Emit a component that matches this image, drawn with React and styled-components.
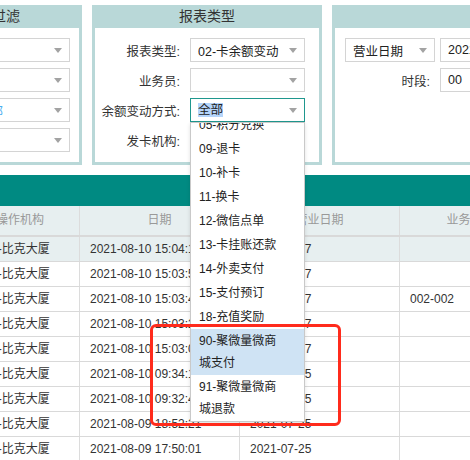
import React, { useLayoutEffect, useRef } from "react";
import styled, { createGlobalStyle } from "styled-components";

const GlobalStyle = createGlobalStyle`
  html, body { margin: 0; padding: 0; background: #fff; overflow: hidden; }
  body { font-family: "Liberation Sans", "Noto Sans CJK SC", sans-serif; color: #333; }
  * { box-sizing: border-box; }
`;

const Viewport = styled.div`
  position: relative;
  width: 470px;
  height: 460px;
  overflow: hidden;
`;

const Page = styled.div`
  margin-left: -98px;
  width: 900px;
  padding-top: 5px;
`;

const PanelRow = styled.div`
  display: flex;
  gap: 10px;
`;

const Panel = styled.section`
  flex: none;
  width: ${(p) => p.$w}px;
  background: #b9d8d8;
  padding: 0 3px 3px;
  display: flex;
  flex-direction: column;
`;

const PanelTitle = styled.div`
  height: 23px;
  line-height: 23px;
  text-align: center;
  font-size: 14px;
  color: #333;
`;

const PanelBody = styled.div`
  flex: 1;
  background: #fff;
  padding: 10px ${(p) => p.$pr}px 10px ${(p) => p.$pl}px;
  display: grid;
  grid-template-columns: ${(p) => p.$cols};
  column-gap: ${(p) => p.$gap}px;
  row-gap: 6px;
  align-items: center;
  align-content: start;
`;

const Label = styled.div`
  font-size: 12.5px;
  color: #333;
  text-align: right;
  white-space: nowrap;
  padding-right: ${(p) => p.$pr || 0}px;
`;

const Box = styled.div`
  position: relative;
  height: 24px;
  border: 1px solid ${(p) => (p.$focused ? "#1f978e" : "#d4d4d4")};
  background: #fff;
  display: flex;
  align-items: center;
  padding: 0 ${(p) => (p.$arrow ? 24 : 6)}px 0 7px;
  font-size: 12.5px;
  color: #222;
  white-space: nowrap;
`;

const BoxText = styled.span`
  min-width: 0;
  overflow: hidden;
  color: ${(p) => p.$color || "#222"};
`;

const Highlight = styled.span`
  background: #b5d5fb;
  line-height: 17px;
`;

const Arrow = styled.span`
  position: absolute;
  right: 7px;
  top: 9px;
  width: 0;
  height: 0;
  border-left: 4px solid transparent;
  border-right: 4px solid transparent;
  border-top: 5px solid #a3a3a3;
`;

const DropList = styled.ul`
  position: absolute;
  top: calc(100% + 1px);
  left: -1px;
  width: calc(100% + 2px);
  height: 300px;
  margin: 0;
  padding: 0;
  list-style: none;
  background: #fff;
  border: 1px solid #c9c9c9;
  box-shadow: 0 2px 4px rgba(0, 0, 0, 0.12);
  overflow-y: scroll;
  z-index: 10;
  white-space: normal;

  &::-webkit-scrollbar { width: 14px; background: #fff; }
  &::-webkit-scrollbar-track { background: #fff; }
  &::-webkit-scrollbar-thumb {
    background: #b4b4b4;
    border-radius: 7px;
    border: 3px solid #fff;
  }
`;

const DropItem = styled.li`
  padding: 1px 8px;
  line-height: 22px;
  font-size: 12px;
  color: #222;
  background: ${(p) => (p.$active ? "#cfe3f4" : "transparent")};
`;

const DropText = styled.span`
  display: block;
  max-width: 80px;
  white-space: normal;
  word-break: break-all;
`;

const TealBar = styled.div`
  margin-top: 10px;
  height: 31px;
  background: #008a82;
`;

const COLS = "59px 119px 160px 160px 130px 200px";

const Row = styled.div`
  display: grid;
  grid-template-columns: ${COLS};
  height: ${(p) => (p.$head ? 31 : 25)}px;
  background: ${(p) => (p.$head || p.$active ? "#e7eff0" : "#fff")};
  border-bottom: ${(p) => (p.$head ? 2 : 1)}px solid #d9d9d9;
`;

const Cell = styled.div`
  border-right: 1px solid #dcdcdc;
  font-size: 12px;
  white-space: nowrap;
  overflow: hidden;
  color: ${(p) => (p.$head ? "#999" : "#333")};
  text-align: ${(p) => (p.$head ? "center" : "left")};
  padding-left: ${(p) => (p.$head ? 0 : 10)}px;
  line-height: ${(p) => (p.$head ? 29 : 24)}px;
`;

const Annotation = styled.div`
  position: absolute;
  left: 150px;
  top: 324px;
  width: 191px;
  height: 102px;
  border: 3px solid #ff2b1c;
  border-radius: 6px;
  z-index: 20;
  pointer-events: none;
`;

const options = [
  "全部", "01-充值", "02-消费", "03-消费撤销", "04-积分消费", "05-积分兑换",
  "09-退卡", "10-补卡", "11-换卡", "12-微信点单", "13-卡挂账还款", "14-外卖支付",
  "15-支付预订", "18-充值奖励", "90-聚微量微商城支付", "91-聚微量微商城退款",
];

const rows = [
  ["1", "0001-比克大厦", "2021-08-10 15:04:12", "2021-07-27", ""],
  ["2", "0001-比克大厦", "2021-08-10 15:03:51", "2021-07-27", ""],
  ["3", "0001-比克大厦", "2021-08-10 15:03:40", "2021-07-27", "002-002"],
  ["4", "0001-比克大厦", "2021-08-10 15:03:22", "2021-07-27", ""],
  ["5", "0001-比克大厦", "2021-08-10 15:03:05", "2021-07-27", ""],
  ["6", "0001-比克大厦", "2021-08-10 09:34:18", "2021-07-25", ""],
  ["7", "0001-比克大厦", "2021-08-10 09:32:47", "2021-07-25", ""],
  ["8", "0001-比克大厦", "2021-08-09 18:52:21", "2021-07-25", ""],
  ["9", "0001-比克大厦", "2021-08-09 17:50:01", "2021-07-25", ""],
  ["10", "0001-比克大厦", "2021-08-09 17:45:33", "2021-07-25", ""],
];

function Select({ value, focused, color, children }) {
  return (
    <Box $arrow $focused={focused}>
      <BoxText $color={color}>{value}</BoxText>
      <Arrow />
      {children}
    </Box>
  );
}

function Dropdown() {
  const ref = useRef(null);
  useLayoutEffect(() => {
    if (ref.current) ref.current.scrollTop = ref.current.scrollHeight;
  }, []);
  return (
    <DropList ref={ref}>
      {options.map((o) => (
        <DropItem key={o} $active={o.startsWith("90")}>
          <DropText>{o}</DropText>
        </DropItem>
      ))}
    </DropList>
  );
}

export default function App() {
  return (
    <Viewport>
      <GlobalStyle />
      <Page>
        <PanelRow>
          <Panel $w={180}>
            <PanelTitle>查询过滤</PanelTitle>
            <PanelBody $cols="55px 100px" $gap={10} $pl={0} $pr={9}>
              <Label>门店:</Label>
              <Select value="" />
              <Label>操作员:</Label>
              <Select value="" />
              <Label>卡类型:</Label>
              <Select value="全部" color="#47aef0" />
              <Label>卡状态:</Label>
              <Select value="" />
            </PanelBody>
          </Panel>
          <Panel $w={230}>
            <PanelTitle>报表类型</PanelTitle>
            <PanelBody $cols="85px 115px" $gap={10} $pl={0} $pr={14}>
              <Label>报表类型:</Label>
              <Select value="02-卡余额变动" />
              <Label>业务员:</Label>
              <Select value="" />
              <Label>余额变动方式:</Label>
              <Select value={<Highlight>全部</Highlight>} focused>
                <Dropdown />
              </Select>
              <Label>发卡机构:</Label>
              <Select value="" />
            </PanelBody>
          </Panel>
          <Panel $w={300}>
            <PanelTitle>&nbsp;</PanelTitle>
            <PanelBody $cols="90px 100px" $gap={5} $pl={10} $pr={10}>
              <Select value="营业日期" />
              <Box>2021-08-10</Box>
              <Label $pr={5}>时段:</Label>
              <Box>00</Box>
            </PanelBody>
          </Panel>
        </PanelRow>
        <TealBar />
        <Row $head>
          <Cell $head>序号</Cell>
          <Cell $head>操作机构</Cell>
          <Cell $head>日期</Cell>
          <Cell $head>营业日期</Cell>
          <Cell $head>业务员</Cell>
          <Cell $head>卡号</Cell>
        </Row>
        {rows.map((r, i) => (
          <Row key={r[0]} $active={i === 0}>
            <Cell>{r[0]}</Cell>
            <Cell>{r[1]}</Cell>
            <Cell>{r[2]}</Cell>
            <Cell>{r[3]}</Cell>
            <Cell>{r[4]}</Cell>
            <Cell></Cell>
          </Row>
        ))}
      </Page>
      <Annotation />
    </Viewport>
  );
}
